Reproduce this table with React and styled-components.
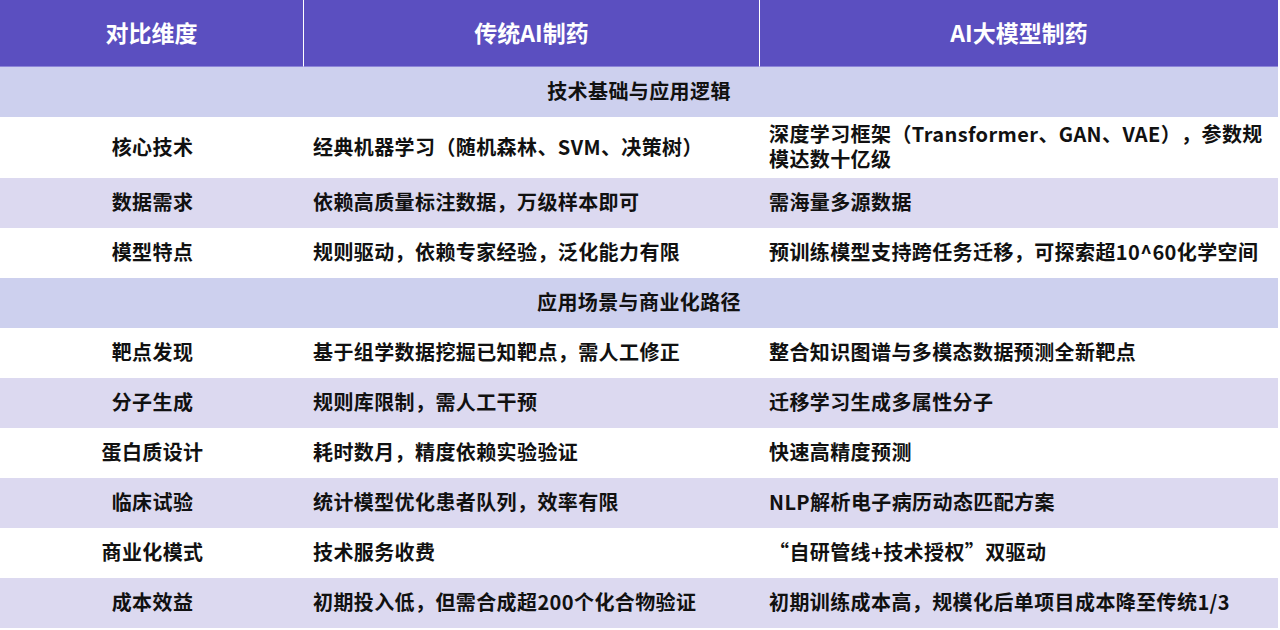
import React from 'react';
import styled, { createGlobalStyle } from 'styled-components';

const GlobalStyle = createGlobalStyle`
	body {
		margin: 0;
		background: #ffffff;
		font-family: "Noto Sans CJK SC", "Noto Sans", sans-serif;
		text-spacing-trim: space-all;
	}
`;

const STable = styled.div`
	width: 1278px;
	display: grid;
	grid-template-columns: 303px 456px 1fr;
`;

const SHead = styled.div`
	height: 67px;
	padding-bottom: 3px;
	background: #5b4fc0;
	color: #ffffff;
	font-size: 23px;
	font-weight: 700;
	display: flex;
	align-items: center;
	justify-content: center;
	border-left: ${(p) => (p.$first ? 'none' : '1px solid #ffffff')};
	border-bottom: 1px solid #8c84d8;
	box-sizing: border-box;
`;

const SSection = styled.div`
	grid-column: 1 / -1;
	height: 50px;
	padding-bottom: 3px;
	box-sizing: border-box;
	background: #cdd0ee;
	color: #111111;
	font-size: 20px;
	font-weight: 700;
	letter-spacing: 0.4px;
	display: flex;
	align-items: center;
	justify-content: center;
`;

const SCell = styled.div`
	min-height: 50px;
	box-sizing: border-box;
	padding: 4px 8px 7px 10px;
	background: ${(p) => (p.$alt ? '#dcd9f0' : '#ffffff')};
	color: #111111;
	font-size: 20px;
	font-weight: 700;
	letter-spacing: 0.4px;
	line-height: 25px;
	display: flex;
	align-items: center;
	justify-content: ${(p) => (p.$center ? 'center' : 'flex-start')};
	text-align: ${(p) => (p.$center ? 'center' : 'left')};
`;

const sections = [
	{
		title: '技术基础与应用逻辑',
		rows: [
			['核心技术', '经典机器学习（随机森林、SVM、决策树）', '深度学习框架（Transformer、GAN、VAE），参数规模达数十亿级'],
			['数据需求', '依赖高质量标注数据，万级样本即可', '需海量多源数据'],
			['模型特点', '规则驱动，依赖专家经验，泛化能力有限', '预训练模型支持跨任务迁移，可探索超10^60化学空间'],
		],
	},
	{
		title: '应用场景与商业化路径',
		rows: [
			['靶点发现', '基于组学数据挖掘已知靶点，需人工修正', '整合知识图谱与多模态数据预测全新靶点'],
			['分子生成', '规则库限制，需人工干预', '迁移学习生成多属性分子'],
			['蛋白质设计', '耗时数月，精度依赖实验验证', '快速高精度预测'],
			['临床试验', '统计模型优化患者队列，效率有限', 'NLP解析电子病历动态匹配方案'],
			['商业化模式', '技术服务收费', '“自研管线+技术授权”双驱动'],
			['成本效益', '初期投入低，但需合成超200个化合物验证', '初期训练成本高，规模化后单项目成本降至传统1/3'],
		],
	},
];

const App = () => {
	return (
		<>
			<GlobalStyle />
			<STable>
				<SHead $first>对比维度</SHead>
				<SHead>传统AI制药</SHead>
				<SHead>AI大模型制药</SHead>
				{sections.map((section) => (
					<React.Fragment key={section.title}>
						<SSection>{section.title}</SSection>
						{section.rows.map((row, i) => (
							<React.Fragment key={row[0]}>
								<SCell $center $alt={i % 2 === 1}>{row[0]}</SCell>
								<SCell $alt={i % 2 === 1}>{row[1]}</SCell>
								<SCell $alt={i % 2 === 1}>{row[2]}</SCell>
							</React.Fragment>
						))}
					</React.Fragment>
				))}
			</STable>
		</>
	);
};

export default App;
